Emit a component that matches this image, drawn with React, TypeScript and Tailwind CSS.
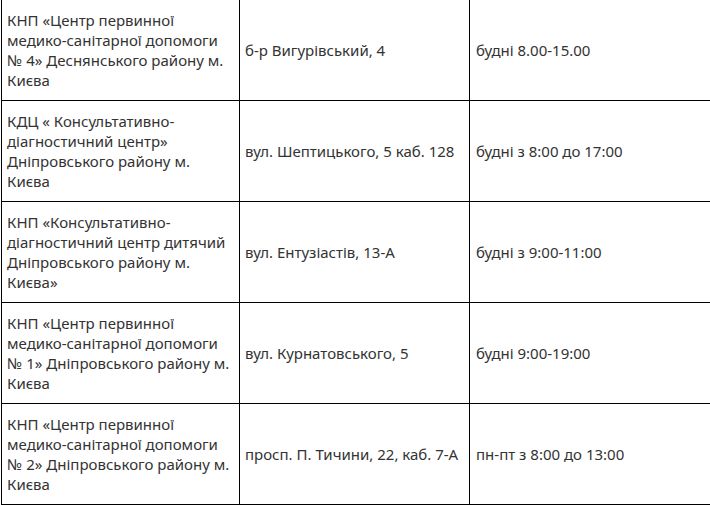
const rows = [
  {
    name: ['КНП «Центр первинної', 'медико-санітарної допомоги', '№ 4» Деснянського району м.', 'Києва'],
    address: 'б-р Вигурівський, 4',
    hours: 'будні 8.00-15.00',
  },
  {
    name: ['КДЦ « Консультативно-', 'діагностичний центр»', 'Дніпровського району м.', 'Києва'],
    address: 'вул. Шептицького, 5 каб. 128',
    hours: 'будні з 8:00 до 17:00',
  },
  {
    name: ['КНП «Консультативно-', 'діагностичний центр дитячий', 'Дніпровського району м.', 'Києва»'],
    address: 'вул. Ентузіастів, 13-А',
    hours: 'будні з 9:00-11:00',
  },
  {
    name: ['КНП «Центр первинної', 'медико-санітарної допомоги', '№ 1» Дніпровського району м.', 'Києва'],
    address: 'вул. Курнатовського, 5',
    hours: 'будні 9:00-19:00',
  },
  {
    name: ['КНП «Центр первинної', 'медико-санітарної допомоги', '№ 2» Дніпровського району м.', 'Києва'],
    address: 'просп. П. Тичини, 22, каб. 7-А',
    hours: 'пн-пт з 8:00 до 13:00',
  },
];

export default function App() {
  return (
    <div className="w-[710px] h-[505px] overflow-hidden bg-white">
      <table
        className="-mt-px ml-px w-[740px] border-collapse table-fixed text-[15px] leading-[20px] text-[#333]"
        style={{ fontFamily: '"Noto Sans", "DejaVu Sans", sans-serif' }}
      >
        <colgroup>
          <col className="w-[238px]" />
          <col className="w-[230px]" />
          <col />
        </colgroup>
        <tbody>
          {rows.map((r, i) => (
            <tr key={i} className="h-[101px]">
              <td className="border border-black px-[5px] align-middle">
                {r.name.map((line, j) => (
                  <span key={j} className="block whitespace-nowrap">{line}</span>
                ))}
              </td>
              <td className="border border-black px-[5px] align-middle whitespace-nowrap">{r.address}</td>
              <td className="border border-black px-[6px] align-middle whitespace-nowrap">{r.hours}</td>
            </tr>
          ))}
        </tbody>
      </table>
    </div>
  );
}
